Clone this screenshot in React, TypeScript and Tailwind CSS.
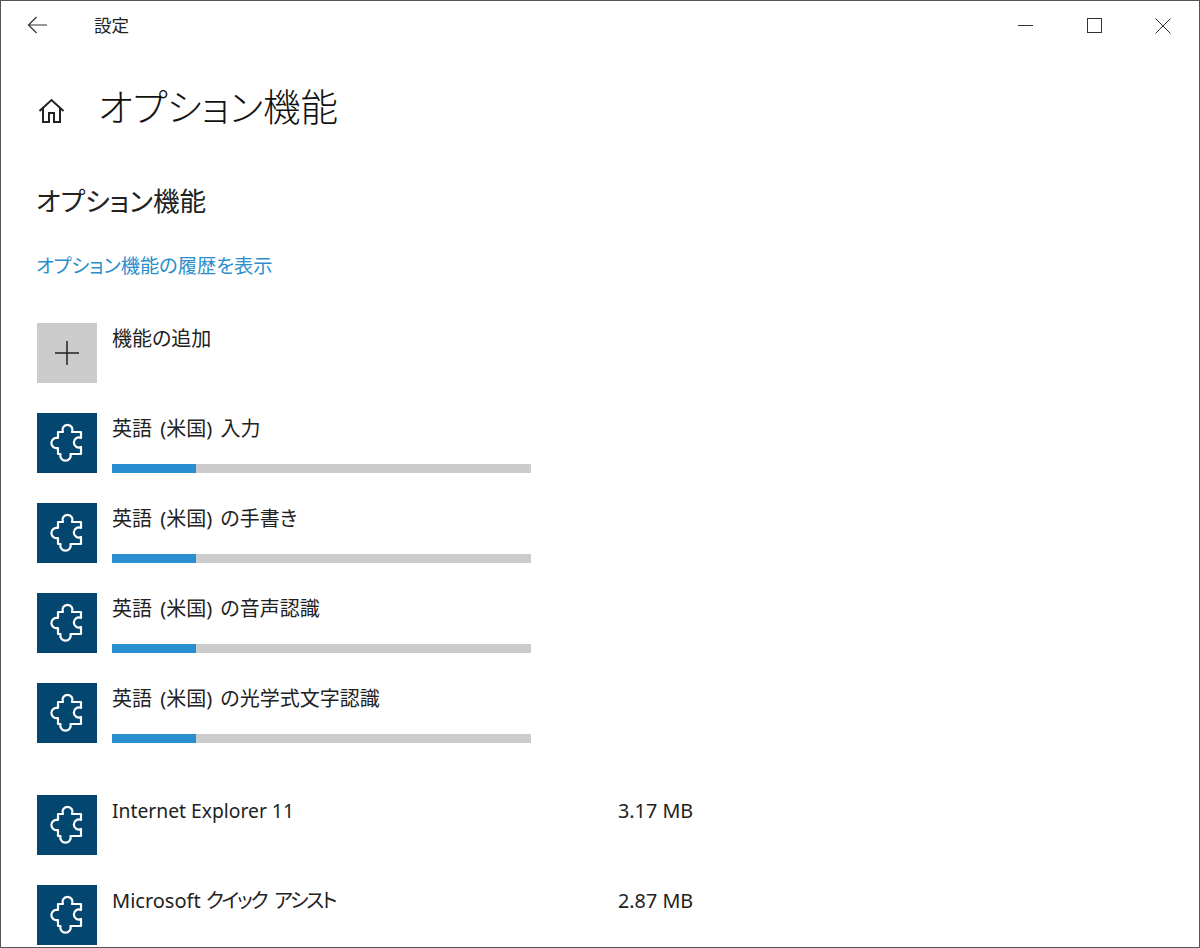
const uiFont = "font-['Noto_Sans','Noto_Sans_CJK_JP',sans-serif] [font-feature-settings:'palt']";

function PuzzleIcon() {
  return (
    <svg width="60" height="60" viewBox="0 0 60 60" fill="none" stroke="white" strokeWidth="2.200" strokeLinejoin="round">
      <path d="M21 19H26A5 5 0 1 1 35 19H44V25A5 5 0 1 0 44 34V41H33.500A5.200 5.200 0 1 1 23.500 41H21V35A5.200 5.200 0 1 1 21 25Z" />
    </svg>
  );
}

function FeatureRow({ name, size, installing }: { name: React.ReactNode; size?: string; installing?: boolean }) {
  return (
    <div className="flex h-[60px] gap-4">
      <div className="h-[60px] w-[60px] shrink-0 bg-[#03466f]">
        <PuzzleIcon />
      </div>
      <div className="-ml-px flex w-[419px] shrink-0 flex-col">
        <div className="h-[51px] pt-px text-[20px] leading-[30px] text-[#222]">{name}</div>
        {installing ? (
          <div className="h-[9px] bg-[#cccccc]">
            <div className="h-full w-[84px] bg-[#2a8fd0]" />
          </div>
        ) : null}
      </div>
      {size ? <div className="ml-[71px] pt-px text-[19.800px] leading-[30px] text-[#222]">{size}</div> : null}
    </div>
  );
}

function EnglishName({ children }: { children: string }) {
  return <span className="[word-spacing:3px]">{children}</span>;
}

export default function App() {
  return (
    <div className={`${uiFont} h-[948px] w-[1200px] overflow-hidden border border-[#555] bg-white`}>
      <div className="flex h-[49px] items-center">
        <div className="mb-[2px] flex w-[94px] justify-center pr-[21px]">
          <svg width="22" height="18" viewBox="0 0 22 18" fill="none" stroke="#333" strokeWidth="1.200">
            <path d="M1 9H20M9.500 1L1.500 9L9.500 17" />
          </svg>
        </div>
        <span className="-ml-px text-[17.500px] text-[#222]">設定</span>
        <div className="ml-auto mr-px flex items-center">
          <div className="flex w-[69px] justify-center">
            <div className="h-px w-[15px] bg-[#333]" />
          </div>
          <div className="flex w-[69px] justify-center">
            <div className="h-[15px] w-[15px] border border-[#333]" />
          </div>
          <div className="flex w-[69px] justify-center pr-[2px]">
            <svg width="16" height="16" viewBox="0 0 16 16" stroke="#333" strokeWidth="1">
              <path d="M.500.500L15.500 15.500M15.500.500L.500 15.500" />
            </svg>
          </div>
        </div>
      </div>

      <div className="flex h-[116px] items-start pt-[29px]">
        <div className="ml-[36px] mt-[19px] w-[61px]">
          <svg width="29" height="26" viewBox="0 0 28 26" fill="none" stroke="#222" strokeWidth="2" strokeLinejoin="miter">
            <path d="M2 13L14 2L26 13M5.500 10V24H11.500V15H16.500V24H22.500V10" />
          </svg>
        </div>
        <h1 className="text-[37.500px] font-light leading-[56px] text-[#111]">オプション機能</h1>
      </div>

      <div className="px-[36px]">
        <h2 className="-ml-px mt-[15px] text-[26.600px] leading-[40px] text-[#222]">オプション機能</h2>
        <a className="-ml-px mt-[30px] block text-[19.250px] leading-[30px] text-[#2b8dcc]">オプション機能の履歴を表示</a>

        <div className="mt-[42px] flex h-[60px] gap-4">
          <div className="flex h-[60px] w-[60px] items-center justify-center bg-[#cccccc]">
            <svg width="24" height="24" viewBox="0 0 24 24" stroke="#222" strokeWidth="1.500">
              <path d="M0 12H24M12 0V24" />
            </svg>
          </div>
          <div className="-ml-px pt-px text-[20px] leading-[30px] text-[#222]">機能の追加</div>
        </div>

        <div className="mt-[30px] flex flex-col gap-[30px]">
          <FeatureRow name={<EnglishName>英語 (米国) 入力</EnglishName>} installing />
          <FeatureRow name={<EnglishName>英語 (米国) の手書き</EnglishName>} installing />
          <FeatureRow name={<EnglishName>英語 (米国) の音声認識</EnglishName>} installing />
          <FeatureRow name={<EnglishName>英語 (米国) の光学式文字認識</EnglishName>} installing />
        </div>

        <div className="mt-[52px] flex flex-col gap-[30px]">
          <FeatureRow name={<span className="text-[19.300px]">Internet Explorer 11</span>} size="3.17 MB" />
          <FeatureRow
            name={
              <>
                Microsoft{' '}
                <span className="tracking-[-2.200px] [word-spacing:5px]">クイック アシスト</span>
              </>
            }
            size="2.87 MB"
          />
        </div>
      </div>
    </div>
  );
}
